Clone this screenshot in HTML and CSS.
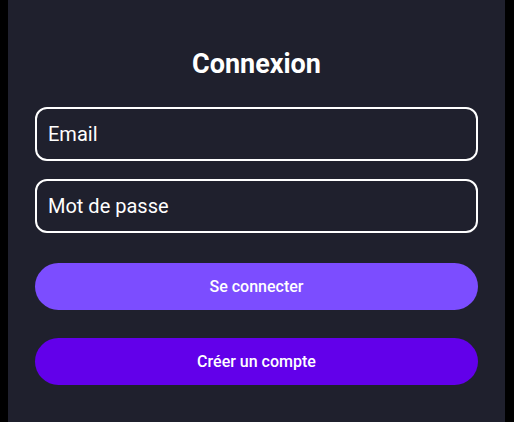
FILE: index.html
```html
<!DOCTYPE html>
<html lang="fr">
<head>
    <meta charset="UTF-8">
    <meta name="viewport" content="width=device-width, initial-scale=1.0">
    <title>Connexion</title>
    <link rel="stylesheet" href="styles.css">
</head>
<body>
    <div class="screen">
        <h1>Connexion</h1>

        <form class="login-form">
            <input type="email" class="field" placeholder="Email">
            <input type="password" class="field" placeholder="Mot de passe">

            <div class="buttons">
                <button type="button" class="btn btn-login">Se connecter</button>
                <button type="button" class="btn btn-register">Créer un compte</button>
            </div>
        </form>
    </div>
</body>
</html>
```

FILE: styles.css
```css
body {
    font-family: Roboto, "Noto Sans", Arial, sans-serif;
    background-color: #000;
    margin: 0;
    padding: 0;
}

.screen {
    width: 497px;
    height: 422px;
    margin-left: 8px;
    background-color: #1f202d;
    padding: 0 27px;
    box-sizing: border-box;
    overflow: hidden;
}

h1 {
    margin: 0;
    padding-top: 48px;
    font-size: 27px;
    line-height: 32px;
    font-weight: 700;
    color: #fff;
    text-align: center;
}

.login-form {
    display: flex;
    flex-direction: column;
    margin-top: 27px;
}

.field {
    height: 54px;
    border: 2px solid #fff;
    border-radius: 12px;
    background: transparent;
    color: #fff;
    font-family: inherit;
    font-size: 20px;
    padding: 0 11px;
    box-sizing: border-box;
    outline: none;
}

.field + .field {
    margin-top: 18px;
}

.field::placeholder {
    color: #fff;
    opacity: 1;
}

.buttons {
    display: flex;
    flex-direction: column;
    gap: 28px;
    margin-top: 30px;
}

.btn {
    height: 47px;
    border: none;
    border-radius: 24px;
    color: #fff;
    font-family: inherit;
    font-size: 16px;
    font-weight: 500;
    cursor: pointer;
}

.btn-login {
    background-color: #7c4dff;
}

.btn-register {
    background-color: #6200ea;
}
```
